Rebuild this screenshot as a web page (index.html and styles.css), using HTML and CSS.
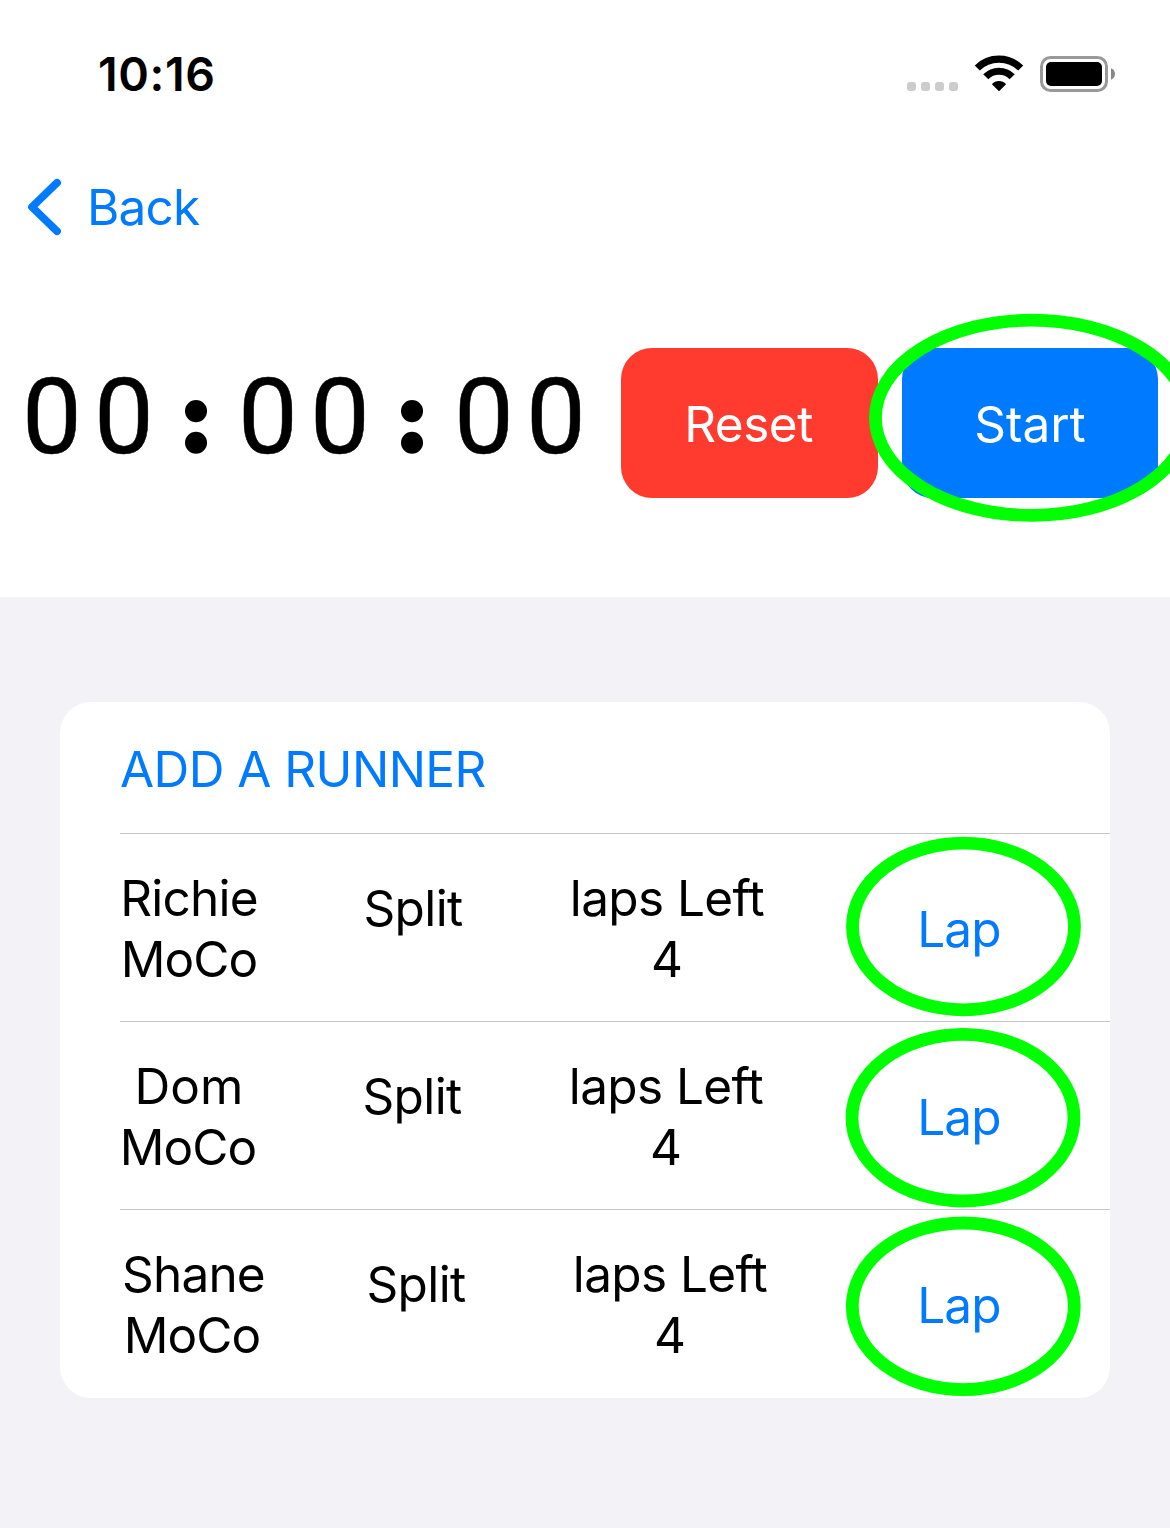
FILE: index.html
```html
<!DOCTYPE html>
<html lang="en">
<head>
<meta charset="utf-8">
<title>Runner Stopwatch</title>
<link rel="stylesheet" href="styles.css">
</head>
<body>
<header class="top">
  <div class="status">
    <span class="clock">10:16</span>
    <span class="cellular"><i></i><i></i><i></i><i></i></span>
    <svg class="wifi" width="50" height="38" viewBox="0 0 50 38">
      <g fill="none" stroke="#000" stroke-width="7.200">
        <path d="M3.300 14C15.200 2.200 34.800 2.200 46.700 14"/>
        <path d="M11.800 22.800C19 15.400 31 15.400 38.200 22.800"/>
      </g>
      <path d="M25 37.300L17.900 30.200C21.600 25.800 28.400 25.800 32.100 30.200Z"/>
    </svg>
    <svg class="battery" width="76" height="36" viewBox="0 0 76 36">
      <rect x="1.5" y="1.5" width="65" height="33" rx="9" fill="none" stroke="#999" stroke-width="3"/>
      <rect x="6" y="6" width="56" height="24" rx="5"/>
      <path d="M71 12.300C76.300 14.300 76.300 21.700 71 23.700Z" fill="#888"/>
    </svg>
  </div>
  <nav class="nav">
    <svg width="34" height="58" viewBox="0 0 34 58"><path d="M30 4.800L5 29L30 53.200" fill="none" stroke="#007aff" stroke-width="7.800" stroke-linecap="round" stroke-linejoin="round"/></svg>
    <span class="back">Back</span>
  </nav>
  <section class="controls">
    <div class="timer"><span>0</span><span>0</span><span class="colon">:</span><span>0</span><span>0</span><span class="colon">:</span><span>0</span><span>0</span></div>
    <button class="btn reset"><span>Reset</span></button>
    <button class="btn start"><span>Start</span></button>
  </section>
</header>
<main class="list">
  <div class="add"><span>ADD A RUNNER</span></div>
  <div class="row">
    <div class="name"><span class="richie">Richie</span><br><span class="moco">MoCo</span></div>
    <div class="split"><span>Split</span></div>
    <div class="laps"><span class="left">laps Left</span><br>4</div>
    <div class="lap"><span>Lap</span></div>
  </div>
  <div class="row second">
    <div class="name"><span class="dom">Dom</span><br><span class="moco">MoCo</span></div>
    <div class="split"><span>Split</span></div>
    <div class="laps"><span class="left">laps Left</span><br>4</div>
    <div class="lap"><span>Lap</span></div>
  </div>
  <div class="row third">
    <div class="name"><span class="shane">Shane</span><br><span class="moco">MoCo</span></div>
    <div class="split"><span>Split</span></div>
    <div class="laps"><span class="left">laps Left</span><br>4</div>
    <div class="lap"><span>Lap</span></div>
  </div>
</main>
<svg class="marks" width="1170" height="1528" viewBox="0 0 1170 1528" fill="none" stroke="#00ff00" stroke-width="12.800">
  <ellipse cx="1031.800" cy="417.800" rx="156.400" ry="97.600"/>
  <ellipse cx="963.500" cy="926.500" rx="111" ry="83.300"/>
  <ellipse cx="963" cy="1117.700" rx="111" ry="83.300"/>
  <ellipse cx="963.300" cy="1306.300" rx="111" ry="83.300"/>
</svg>
</body>
</html>
```
FILE: styles.css
```css
* { box-sizing: border-box; }
body {
  margin: 0;
  width: 1170px;
  height: 1528px;
  overflow: hidden;
  position: relative;
  background: #f2f2f7;
  color: #000;
  font: 49.5px/61px Inter, sans-serif;
  white-space: nowrap;
}
svg { display: block; flex: none; }
.top { height: 597px; background: #fff; overflow: hidden; }
.status { display: flex; height: 92px; padding: 0 54px 0 98px; align-items: flex-end; }
.clock { font-size: 46.5px; font-weight: 600; line-height: 46px; margin: 0 auto -5px 0; letter-spacing: 0.6px; }
.cellular { display: flex; gap: 5px; margin-right: 16px; margin-bottom: 1px; }
.cellular i { width: 9px; height: 9px; border-radius: 3px; background: #ccc; }
.wifi { margin-right: 16px; }
.nav { display: flex; align-items: center; height: 62px; margin-top: 84px; padding: 0 0 0 27px; color: #007aff; gap: 26px; }
.nav svg { margin-top: -1px; }
.back { letter-spacing: -0.8px; }
.controls { display: flex; margin-top: 110px; padding-left: 16px; height: 150px; }
.timer { display: grid; grid-template-columns: repeat(8, 72px); width: 605px; padding-top: 1px; font-family: Roboto, sans-serif; font-size: 106.5px; line-height: 136px; text-align: center; -webkit-text-stroke: 0.5px #000; }
.timer .colon { padding-top: 1px; font-family: Inter, sans-serif; font-size: 80px; -webkit-text-stroke: 11.5px #000; }
.btn { border: 0; padding: 0; width: 257px; height: 150px; border-radius: 31px; color: #fff; font: inherit; }
.btn span { display: block; margin-top: 2px; }
.reset { background: #ff3b30; letter-spacing: -0.5px; }
.reset span { margin-right: 2px; }
.start { background: #007aff; width: 256px; margin-left: 24px; }
.list { margin: 105px 60px 0; height: 696px; padding-left: 60px; border-radius: 31px; background: #fff; }
.add { height: 131px; padding-top: 37px; color: #007aff; letter-spacing: -0.55px; }
.row { display: flex; height: 188px; padding-top: 34px; border-top: 1px solid #c6c6c8; text-align: center; }
.name { width: 138px; }
.richie, .shane { letter-spacing: -0.8px; }
.dom { margin-left: 2px; }
.shane { margin-left: -1px; }
.moco { letter-spacing: -0.9px; }
.split { width: 110px; margin: 10px 0 0 100px; letter-spacing: -0.6px; }
.laps { width: 210px; margin-left: 94px; }
.left { letter-spacing: -0.6px; }
.lap { width: 100px; margin: 31px 0 0 137px; color: #007aff; letter-spacing: -0.8px; }
.second .name { margin-left: -1px; }
.second .lap { margin-left: 138px; }
.third .name { margin-left: 3px; }
.third .lap { margin-left: 134px; }
.marks { position: absolute; left: 0; top: 0; }
```
